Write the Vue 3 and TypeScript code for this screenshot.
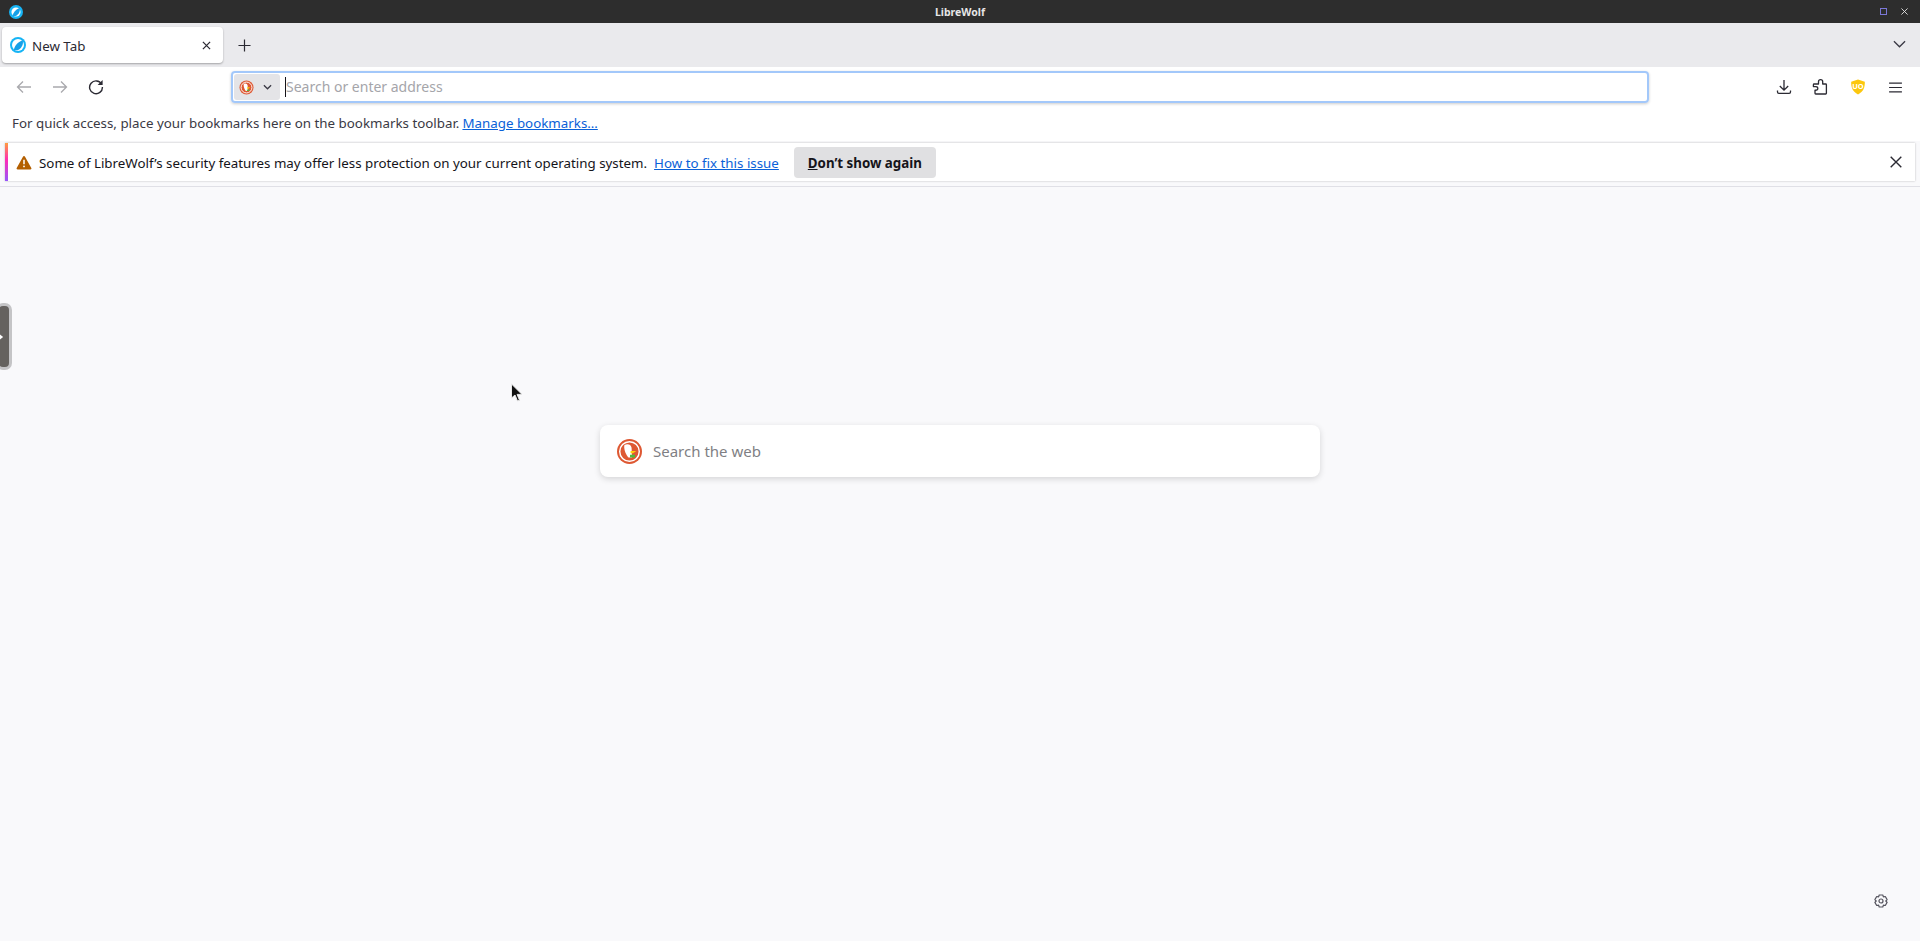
<script setup lang="ts">
const iconSize: number = 16
</script>

<template>
  <div class="window">
    <header class="titlebar">
      <svg class="app-icon" viewBox="0 0 16 16" width="14" height="14"><circle cx="8" cy="8" r="8" fill="#16b4f5"/><circle cx="8" cy="8" r="5.200" fill="#fff"/><path d="M4 12.500C4.800 8.500 7.500 5 12.300 3.400c.7 3.700-1 7.400-4.800 9.200z" fill="#16a0e8"/></svg>
      <span class="title">LibreWolf</span>
      <div class="win-controls">
        <span class="win-max"></span>
        <svg viewBox="0 0 8 8" width="7" height="7"><path d="M.5.5l7 7M7.500.5l-7 7" stroke="#e8e8e8" stroke-width="1"/></svg>
      </div>
    </header>

    <div class="tabstrip">
      <div class="tab">
        <svg viewBox="0 0 16 16" :width="iconSize" :height="iconSize"><circle cx="8" cy="8" r="8" fill="#16b4f5"/><circle cx="8" cy="8" r="6" fill="#fff"/><path d="M3.800 13C4.600 8.800 7.500 5 12.800 3.200c.8 4-1 8-5.200 10z" fill="#16a0e8"/></svg>
        <span class="tab-label">New Tab</span>
        <svg class="tab-close" viewBox="0 0 10 10" width="9" height="9"><path d="M1 1l8 8M9 1l-8 8" stroke="#2b2a33" stroke-width="1.400"/></svg>
      </div>
      <svg class="new-tab" viewBox="0 0 14 14" width="13" height="13"><path d="M7 .5v13M.5 7h13" stroke="#2b2a33" stroke-width="1.300"/></svg>
      <svg class="tabs-menu" viewBox="0 0 14 8" width="13" height="8"><path d="M1 1l6 6 6-6" fill="none" stroke="#3a3944" stroke-width="1.400"/></svg>
    </div>

    <nav class="navbar">
      <div class="nav-left">
        <svg viewBox="0 0 16 16" width="16" height="16"><path d="M15 8H1.500M7 2.500L1.500 8 7 13.500" fill="none" stroke="#a9a9ad" stroke-width="1.300"/></svg>
        <svg viewBox="0 0 16 16" width="16" height="16"><path d="M1 8h13.500M9 2.500L14.500 8 9 13.500" fill="none" stroke="#a9a9ad" stroke-width="1.300"/></svg>
        <svg viewBox="0 0 16 16" width="16" height="16"><path d="M13.600 5.200A6.400 6.400 0 1 0 14.400 8" fill="none" stroke="#2b2a33" stroke-width="1.400"/><path d="M14.600 1v5h-5z" fill="#2b2a33"/></svg>
      </div>
      <div class="urlbar">
        <div class="engine">
          <svg viewBox="0 0 16 16" width="15" height="15"><circle cx="8" cy="8" r="7.500" fill="#de5833"/><circle cx="8" cy="8" r="5.800" fill="none" stroke="#fff" stroke-width="1"/><path d="M5 4.200c1.800-1.100 3.900-.4 4.200 1.600l.3 6H7.300C6 10.200 4.600 7 5 4.200z" fill="#fff"/><path d="M8.700 7.800h3.300l-2 1.400H8.700z" fill="#fdd20a"/><path d="M8.400 10.200h2.600v1.500H8.400z" fill="#4cba3c"/></svg>
          <svg viewBox="0 0 10 6" width="9" height="6"><path d="M1 1l4 4 4-4" fill="none" stroke="#3a3944" stroke-width="1.400"/></svg>
        </div>
        <span class="caret"></span>
        <span class="placeholder">Search or enter address</span>
      </div>
      <div class="nav-right">
        <svg viewBox="0 0 16 16" width="16" height="16"><path d="M8 1v10M3.800 7L8 11.200 12.200 7M1.500 11.500V13c0 .8.600 1.400 1.400 1.400h10.200c.8 0 1.400-.6 1.400-1.400v-1.500" fill="none" stroke="#2b2a33" stroke-width="1.300"/></svg>
        <svg class="ext" viewBox="0 0 16 16" width="16" height="16"><path d="M6.500 5V2.800a2.100 2.100 0 0 1 4.200 0V5h3c.4 0 .7.300.7.700v8.600c0 .4-.3.700-.7.700H3.700c-.4 0-.7-.3-.7-.7V11.200c1.600.3 2.800-.5 2.800-1.800S4.500 7.300 3 7.600H1.400V5.700c0-.4.300-.7.700-.7z" fill="none" stroke="#2b2a33" stroke-width="1.300" stroke-linejoin="round"/></svg>
        <div class="ublock">
          <svg viewBox="0 0 16 16" width="16" height="16"><path d="M8 .5l6.800 2.300c.2 5.500-1.400 10-6.800 12.700C2.600 12.800 1 8.300 1.200 2.800z" fill="#fcc70d"/></svg>
          <span class="ublock-text">UO</span>
        </div>
        <svg class="menu" viewBox="0 0 14 12" width="13" height="11"><path d="M0 1.200h14M0 6h14M0 10.800h14" stroke="#2b2a33" stroke-width="1.300"/></svg>
      </div>
    </nav>

    <div class="bookmarks">
      <span>For quick access, place your bookmarks here on the bookmarks toolbar.</span>
      <a class="link">Manage bookmarks…</a>
    </div>

    <div class="notice">
      <svg viewBox="0 0 16 15" width="16" height="15"><path d="M8 1c.4 0 .7.200.9.500l6.400 11.400c.4.700-.1 1.500-.9 1.500H1.600c-.8 0-1.300-.8-.9-1.500L7.100 1.500C7.300 1.200 7.600 1 8 1z" fill="#b35f00"/><path d="M8 4.800v4.400" stroke="#fff" stroke-width="1.500"/><circle cx="8" cy="11.400" r=".9" fill="#fff"/></svg>
      <span class="notice-text">Some of LibreWolf’s security features may offer less protection on your current operating system.</span>
      <a class="link notice-link">How to fix this issue</a>
      <button class="notice-btn"><u>D</u>on’t show again</button>
      <svg class="notice-close" viewBox="0 0 12 12" width="12" height="12"><path d="M.7.700l10.600 10.600M11.300.700L.7 11.300" stroke="#2b2a33" stroke-width="1.400"/></svg>
    </div>

    <main class="content">
      <div class="handle">
        <svg viewBox="0 0 6 8" width="6" height="8"><path d="M0 0l5 4-5 4z" fill="#fff"/></svg>
      </div>
      <svg class="pointer" viewBox="0 0 14 20" width="14" height="20"><path d="M1.500 1v14l3.500-3 2.500 6 2-.8-2.400-5.800H12z" fill="#111" stroke="#e8e8e8" stroke-width="1"/></svg>
      <div class="search">
        <svg viewBox="0 0 24 24" width="25" height="25"><circle cx="12" cy="12" r="12" fill="#de5833"/><circle cx="12" cy="12" r="9.400" fill="none" stroke="#fff" stroke-width="1.400"/><path d="M7 6c2.800-1.700 6.400-.8 7 2.400l.4 9.400H11C8.800 15.500 6.400 10.500 7 6z" fill="#fff"/><path d="M13 11.500h5.500l-3.200 2.200H13z" fill="#fdd20a"/><path d="M12.500 15h4.800v2.800h-4.800z" fill="#4cba3c"/></svg>
        <span class="search-label">Search the web</span>
      </div>
      <svg class="gear" viewBox="0 0 16 16" width="16" height="16"><path d="M6.200 1h3.600l.6 1.900 1.900-.4 1.800 3.100-1.300 1.400 1.300 1.400-1.800 3.100-1.900-.4-.6 1.900H6.200l-.6-1.900-1.900.4-1.800-3.100L3.200 7 1.900 5.600l1.800-3.100 1.900.4z" transform="translate(0 1)" fill="none" stroke="#55545e" stroke-width="1.200" stroke-linejoin="round"/><circle cx="8" cy="8" r="2" fill="none" stroke="#55545e" stroke-width="1.200"/></svg>
    </main>
  </div>
</template>

<style>
html, body { margin: 0; padding: 0; }
</style>

<style scoped>
.window {
  width: 1920px;
  height: 941px;
  display: flex;
  flex-direction: column;
  overflow: hidden;
  background: #f9f9fb;
  font-family: "Noto Sans", "Open Sans", sans-serif;
  color: #15141a;
}
.titlebar {
  height: 23px;
  flex: none;
  background: #2d2d2d;
  display: flex;
  align-items: center;
  padding: 0 12px 0 9px;
  position: relative;
}
.title {
  position: absolute;
  left: 0;
  right: 0;
  text-align: center;
  color: #e6e6e6;
  font-size: 10.5px;
  font-weight: 700;
}
.win-controls {
  margin-left: auto;
  display: flex;
  align-items: center;
  gap: 14px;
}
.win-max {
  width: 5px;
  height: 5px;
  border: 1px solid #7b78d8;
}
.tabstrip {
  height: 44px;
  flex: none;
  background: #eaeaed;
  display: flex;
  align-items: center;
  padding: 0 14px 0 2px;
}
.tab {
  width: 221px;
  height: 36px;
  box-sizing: border-box;
  background: #fff;
  border-radius: 4px;
  box-shadow: 0 1px 2px rgba(0, 0, 0, .3);
  display: flex;
  align-items: center;
  padding: 0 12px 0 8px;
}
.tab-label {
  margin-left: 6px;
  margin-top: 1px;
  font-size: 13.333px;
  color: #2b2a33;
}
.tab-close { margin-left: auto; }
.new-tab { margin-left: 15px; }
.tabs-menu { margin-left: auto; margin-top: -3px; }
.navbar {
  height: 40px;
  flex: none;
  background: #fff;
  display: flex;
  align-items: center;
  padding: 0 16px;
}
.nav-left {
  width: 215px;
  flex: none;
  display: flex;
  align-items: center;
  gap: 20px;
}
.urlbar {
  width: 1418px;
  flex: none;
  height: 32px;
  box-sizing: border-box;
  border: 2px solid #a3c8fa;
  border-radius: 4px;
  box-shadow: 0 1px 3px rgba(0, 0, 0, .2);
  display: flex;
  align-items: center;
  padding: 1px;
}
.engine {
  width: 46px;
  height: 100%;
  box-sizing: border-box;
  padding-left: 5px;
  border-radius: 3px;
  background: #e4e4e7;
  display: flex;
  align-items: center;
  gap: 9px;
}
.caret {
  width: 1px;
  height: 20px;
  margin-left: 5px;
  background: #15141a;
}
.placeholder {
  font-size: 14px;
  color: #a5a5aa;
  margin-top: -1px;
}
.nav-right {
  margin-left: auto;
  display: flex;
  align-items: center;
  padding-right: 2px;
}
.ext { margin-left: 20px; }
.ublock {
  position: relative;
  width: 16px;
  height: 16px;
  margin-left: 22px;
}
.menu { margin-left: 23px; }
.ublock svg { display: block; }
.ublock-text {
  position: absolute;
  inset: 0;
  text-align: center;
  font-size: 7.5px;
  font-weight: 700;
  line-height: 15px;
  color: #fff;
}
.bookmarks {
  height: 34px;
  flex: none;
  background: #fff;
  display: flex;
  align-items: center;
  gap: 3px;
  padding-left: 12px;
  font-size: 13.333px;
  color: #3a3944;
  padding-bottom: 2px;
  box-sizing: border-box;
}
.link {
  color: #0a61d8;
  text-decoration: underline;
}
.notice {
  height: 38px;
  flex: none;
  box-sizing: border-box;
  margin: 2px 5px 0;
  background: #fff;
  border-left: 3px solid;
  border-image: linear-gradient(#ffa436, #ff2bb6 45%, #9059ff) 1;
  box-shadow: 0 0 2px rgba(0, 0, 0, .25);
  display: flex;
  align-items: center;
  padding: 0 13px 0 8px;
  font-size: 13.333px;
}
.notice-text { margin-left: 7px; margin-top: 1px; }
.notice-link { margin-left: 7px; margin-top: 1px; }
.notice-btn {
  margin-left: 15px;
  width: 142px;
  height: 31px;
  border: none;
  border-radius: 4px;
  background: #e0e0e2;
  color: #15141a;
  font-family: inherit;
  font-size: 13.333px;
  font-weight: 700;
  padding: 1px 0 0;
}
.notice-close { margin-left: auto; }
.content {
  flex: 1;
  position: relative;
  background: #f9f9fb;
  margin-top: 5px;
  border-top: 1px solid #e0e0e6;
  display: flex;
  justify-content: center;
  align-items: flex-start;
  padding-top: 238px;
}
.handle {
  position: absolute;
  left: -4px;
  top: 116px;
  width: 10px;
  height: 61px;
  background: #65625f;
  border: 3px solid #c4c4c6;
  border-radius: 7px;
  display: flex;
  align-items: center;
  justify-content: flex-end;
}
.handle svg { margin-right: 5px; }
.pointer {
  position: absolute;
  left: 510px;
  top: 196px;
}
.search {
  width: 720px;
  height: 52px;
  box-sizing: border-box;
  background: #fff;
  border-radius: 8px;
  box-shadow: 0 2px 6px rgba(0, 0, 0, .15);
  display: flex;
  align-items: center;
  padding-left: 17px;
}
.search-label {
  margin-left: 11px;
  font-size: 15px;
  color: #7f7f84;
}
.gear {
  position: absolute;
  right: 31px;
  bottom: 32px;
}
</style>
